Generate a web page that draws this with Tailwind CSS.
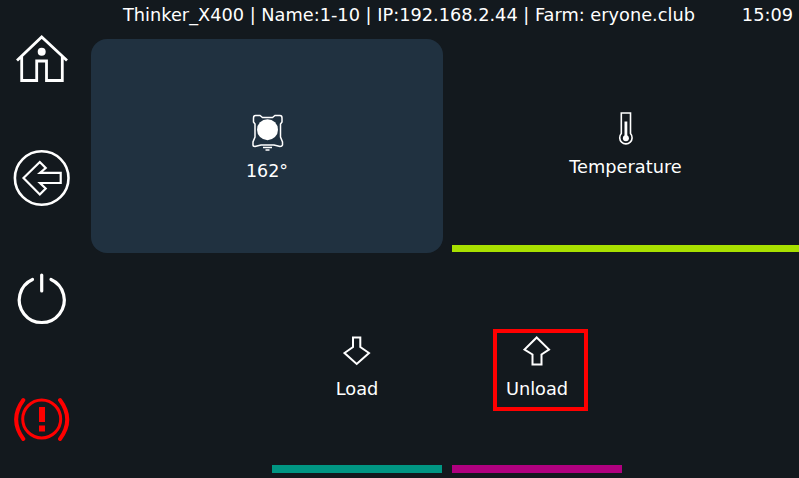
<!DOCTYPE html>
<html lang="en">
<head>
    <meta charset="UTF-8">
    <title>Thinker_X400</title>
    <script src="https://cdn.jsdelivr.net/npm/@tailwindcss/browser@4"></script>
</head>
<body class="bg-[#13191e] text-white font-['DejaVu_Sans'] overflow-hidden">
<div class="flex w-[799px] h-[478px]">

    <!-- Sidebar -->
    <nav class="w-[84px] shrink-0 grid grid-rows-4 justify-items-center items-center">
        <svg class="w-[60px] h-[60px]" viewBox="12 30 60 60" fill="none" stroke="white" stroke-width="2.8">
            <path d="M17 60.5 L41.7 37 L67 60.5 M21.7 56 V80.5 H36.7 V61 H46.5 V80.5 H62.3 V56"/>
            <circle cx="41.7" cy="51.7" r="4" fill="white" stroke="none"/>
        </svg>
        <svg class="w-[60px] h-[60px]" viewBox="12 150 60 60" fill="none" stroke="white" stroke-width="2.6">
            <circle cx="41.7" cy="179" r="26.8"/>
            <path d="M23.5 179 L39.8 163 L45.7 169 L40 173.8 H60.7 V184 H40 L45.7 189.5 L39.8 195.5 Z" stroke-width="2.2"/>
        </svg>
        <svg class="w-[60px] h-[60px]" viewBox="12 270 60 60" fill="none" stroke="white" stroke-width="3.2" stroke-linecap="round">
            <path d="M32.5 280.5 A22.5 22.5 0 1 0 51 280.5"/>
            <path d="M41.7 276 V292"/>
        </svg>
        <svg class="w-[60px] h-[60px]" viewBox="12 390 60 60" fill="none" stroke="#ff0000" stroke-width="3">
            <circle cx="41.7" cy="421" r="19"/>
            <path d="M23.3 402 Q9 421.5 23.3 441 M60 402 Q74.5 421.5 60 441" stroke-width="4" stroke-linecap="round"/>
            <rect x="39" y="409" width="6" height="15" fill="#ff0000" stroke="none"/>
            <rect x="39" y="427.5" width="6" height="6" fill="#ff0000" stroke="none"/>
        </svg>
    </nav>

    <main class="flex-1 flex flex-col">
        <!-- Status bar -->
        <header class="h-[39px] pt-[3px] flex text-[17.75px] leading-[24px] whitespace-nowrap">
            <span class="ml-[39px]">Thinker_X400 | Name:1-10 | IP:192.168.2.44 | Farm: eryone.club</span>
            <span class="ml-auto mr-[6px]">15:09</span>
        </header>

        <!-- Top tabs -->
        <section class="h-[214px] flex gap-[9px] pl-[7px]">
            <button class="w-[352px] bg-[#203140] rounded-[16px] flex flex-col items-center">
                <svg class="mt-[74px] w-[36px] h-[42px]" viewBox="248 113 36 42" fill="none" stroke="white" stroke-width="1.5">
                    <path d="M254.5 115.5 H259 L261.5 117.5 H271.5 L274 115.5 H279 Q281 115.5 281 118 V122 L279.5 124 V137 L281.5 142 V145 Q281 146.5 279 146.5 L273 145 H260 L254 146.5 Q252 146.5 252 145 V142 L254 137 V124 L252.5 122 V118 Q252.5 115.5 254.5 115.5 Z"/>
                    <circle cx="266.5" cy="129.7" r="10.5" fill="white" stroke="none"/>
                    <path d="M262 147.5 H271 M264.5 150 H268.5"/>
                </svg>
                <span class="mt-[4px] text-[17.5px] leading-[24px]">162°</span>
            </button>
            <button class="flex-1 flex flex-col items-center">
                <svg class="mt-[72px] w-[24px] h-[36px]" viewBox="614.5 112 24 36" fill="none" stroke="white" stroke-width="1.6">
                    <path d="M621.8 114 H631 V134.5 A6.2 6.2 0 1 1 621.8 134.5 Z"/>
                    <rect x="625" y="122.5" width="2.8" height="15" fill="white" stroke="none"/>
                    <circle cx="626.4" cy="139.3" r="3" fill="white" stroke="none"/>
                </svg>
                <span class="mt-[8px] text-[17.75px] leading-[24px]">Temperature</span>
                <span class="mt-auto mb-[1px] w-full h-[7px] bg-[#a8e000]"></span>
            </button>
        </section>

        <!-- Bottom tabs -->
        <section class="h-[220px] flex gap-[10px] pl-[188px]">
            <button class="w-[170px] flex flex-col items-center">
                <svg class="mt-[82px] w-[30px] h-[32px]" viewBox="342 335.5 30 32" fill="none" stroke="white" stroke-width="2">
                    <path d="M353 338 H360.3 V347.5 L369 353.5 L356.7 364.5 L344.5 353.5 L353 347.5 Z"/>
                </svg>
                <span class="mt-[10px] text-[17.75px] leading-[24px]">Load</span>
                <span class="mt-auto w-full h-[8px] bg-[#009683]"></span>
            </button>
            <button class="relative w-[170px] flex flex-col items-center">
                <svg class="mt-[82px] w-[30px] h-[32px]" viewBox="522 335.5 30 32" fill="none" stroke="white" stroke-width="2">
                    <path d="M536.7 338 L549 350 L541.5 355 V365 H532.5 V355 L524.5 350 Z"/>
                </svg>
                <span class="mt-[10px] text-[17.75px] leading-[24px]">Unload</span>
                <span class="mt-auto w-full h-[8px] bg-[#b0007f]"></span>
                <span class="absolute left-[41px] top-[76px] w-[95px] h-[82px] border-4 border-[#ff0000]"></span>
            </button>
        </section>
    </main>
</div>
</body>
</html>
